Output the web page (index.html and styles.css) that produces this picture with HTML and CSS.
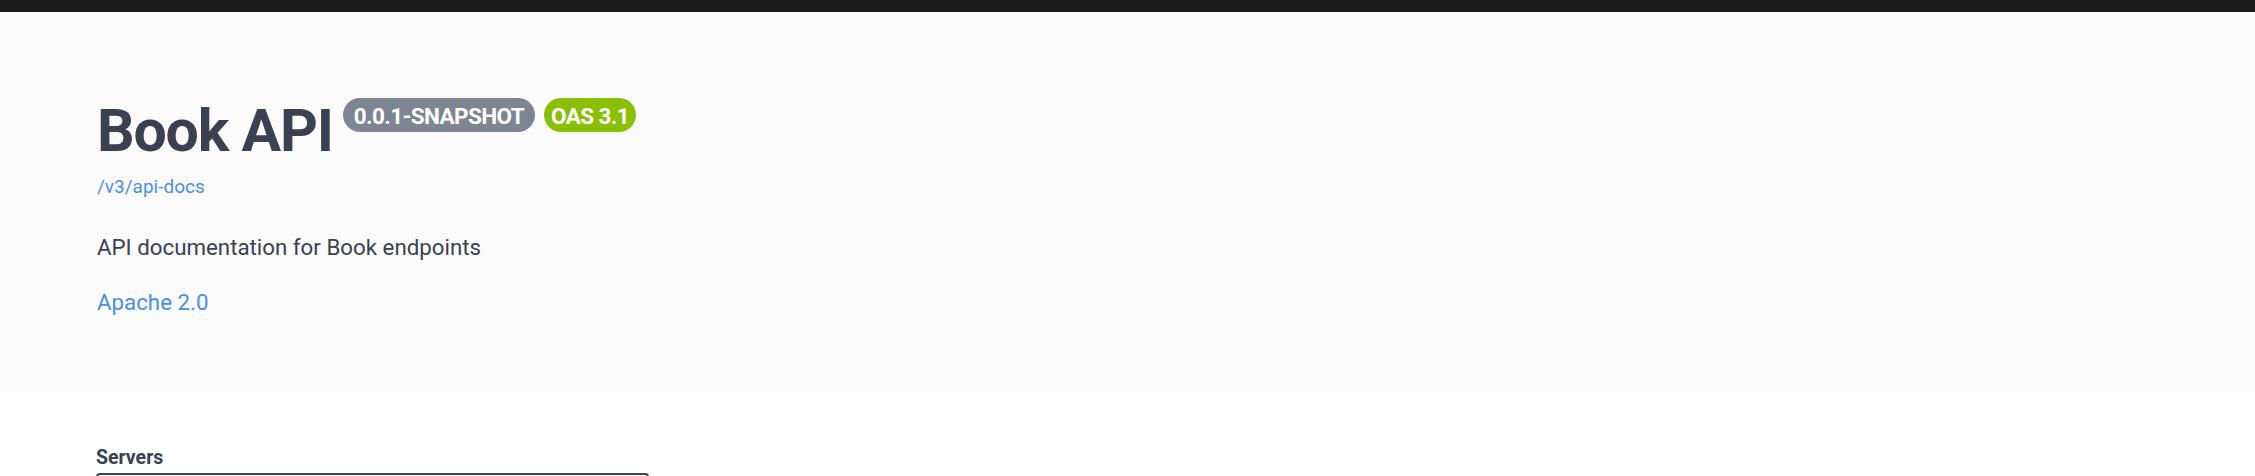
FILE: index.html
```html
<!DOCTYPE html>
<html lang="en">
<head>
  <meta charset="UTF-8" />
  <meta name="viewport" content="width=device-width, initial-scale=1.0">
  <title>Book API</title>
  <link rel="stylesheet" href="styles.css">
</head>
<body>
  <div class="topbar"></div>

  <section class="info">
    <div class="title-row">
      <h2 class="title">Book API</h2>
      <span class="badge badge-version">0.0.1-SNAPSHOT</span>
      <span class="badge badge-oas">OAS 3.1</span>
    </div>
    <a class="url" href="#">/v3/api-docs</a>
    <p class="description">API documentation for Book endpoints</p>
    <a class="license" href="#">Apache 2.0</a>
  </section>

  <section class="schemes">
    <span class="servers-label">Servers</span>
    <div class="servers-select"></div>
  </section>
</body>
</html>
```

FILE: styles.css
```css
body {
  margin: 0;
  font-family: Roboto, "Liberation Sans", sans-serif;
  color: #3b4151;
  background: #fff;
  overflow: hidden;
}

.topbar {
  height: 12px;
  background: #1b1b1b;
}

/* blok s nazvem API */
.info {
  background: #fafafa;
  padding: 89px 0 75px 97px;
  display: flex;
  flex-direction: column;
  align-items: flex-start;
}

.title-row {
  display: flex;
  align-items: flex-start;
  height: 59px;
}

.title {
  margin: 0;
  font-size: 59px;
  line-height: 59px;
  font-weight: 700;
  letter-spacing: -1.2px;
}

.badge {
  margin-top: -3px;
  height: 34px;
  box-sizing: border-box;
  padding-top: 3px;
  line-height: 31px;
  border-radius: 17px;
  color: #fff;
  font-size: 22.5px;
  font-weight: 700;
  letter-spacing: -0.6px;
}

.badge-version {
  background: #7d8492;
  margin-left: 10px;
  padding-left: 11px;
  padding-right: 11px;
}

.badge-oas {
  background: #89bf04;
  margin-left: 9px;
  padding-left: 7px;
  padding-right: 7px;
}

.url {
  margin-top: 15px;
  font-size: 19px;
  line-height: 24px;
  color: #4990e2;
  text-decoration: none;
}

.description {
  margin: 33px 0 0 0;
  font-size: 22.3px;
  line-height: 30px;
}

.license {
  margin-top: 25px;
  font-size: 22.3px;
  line-height: 30px;
  color: #4990e2;
  text-decoration: none;
}

/* servery */
.schemes {
  padding: 55px 0 0 96px;
}

.servers-label {
  display: block;
  font-size: 19.5px;
  line-height: 22px;
  font-weight: 700;
}

.servers-select {
  margin-top: 4px;
  width: 553px;
  height: 44px;
  box-sizing: border-box;
  border: 2px solid #41444e;
  border-radius: 4px;
  background: #f7f7f7;
  box-shadow: 0 1px 2px 0 rgba(0,0,0,0.25);
}
```
